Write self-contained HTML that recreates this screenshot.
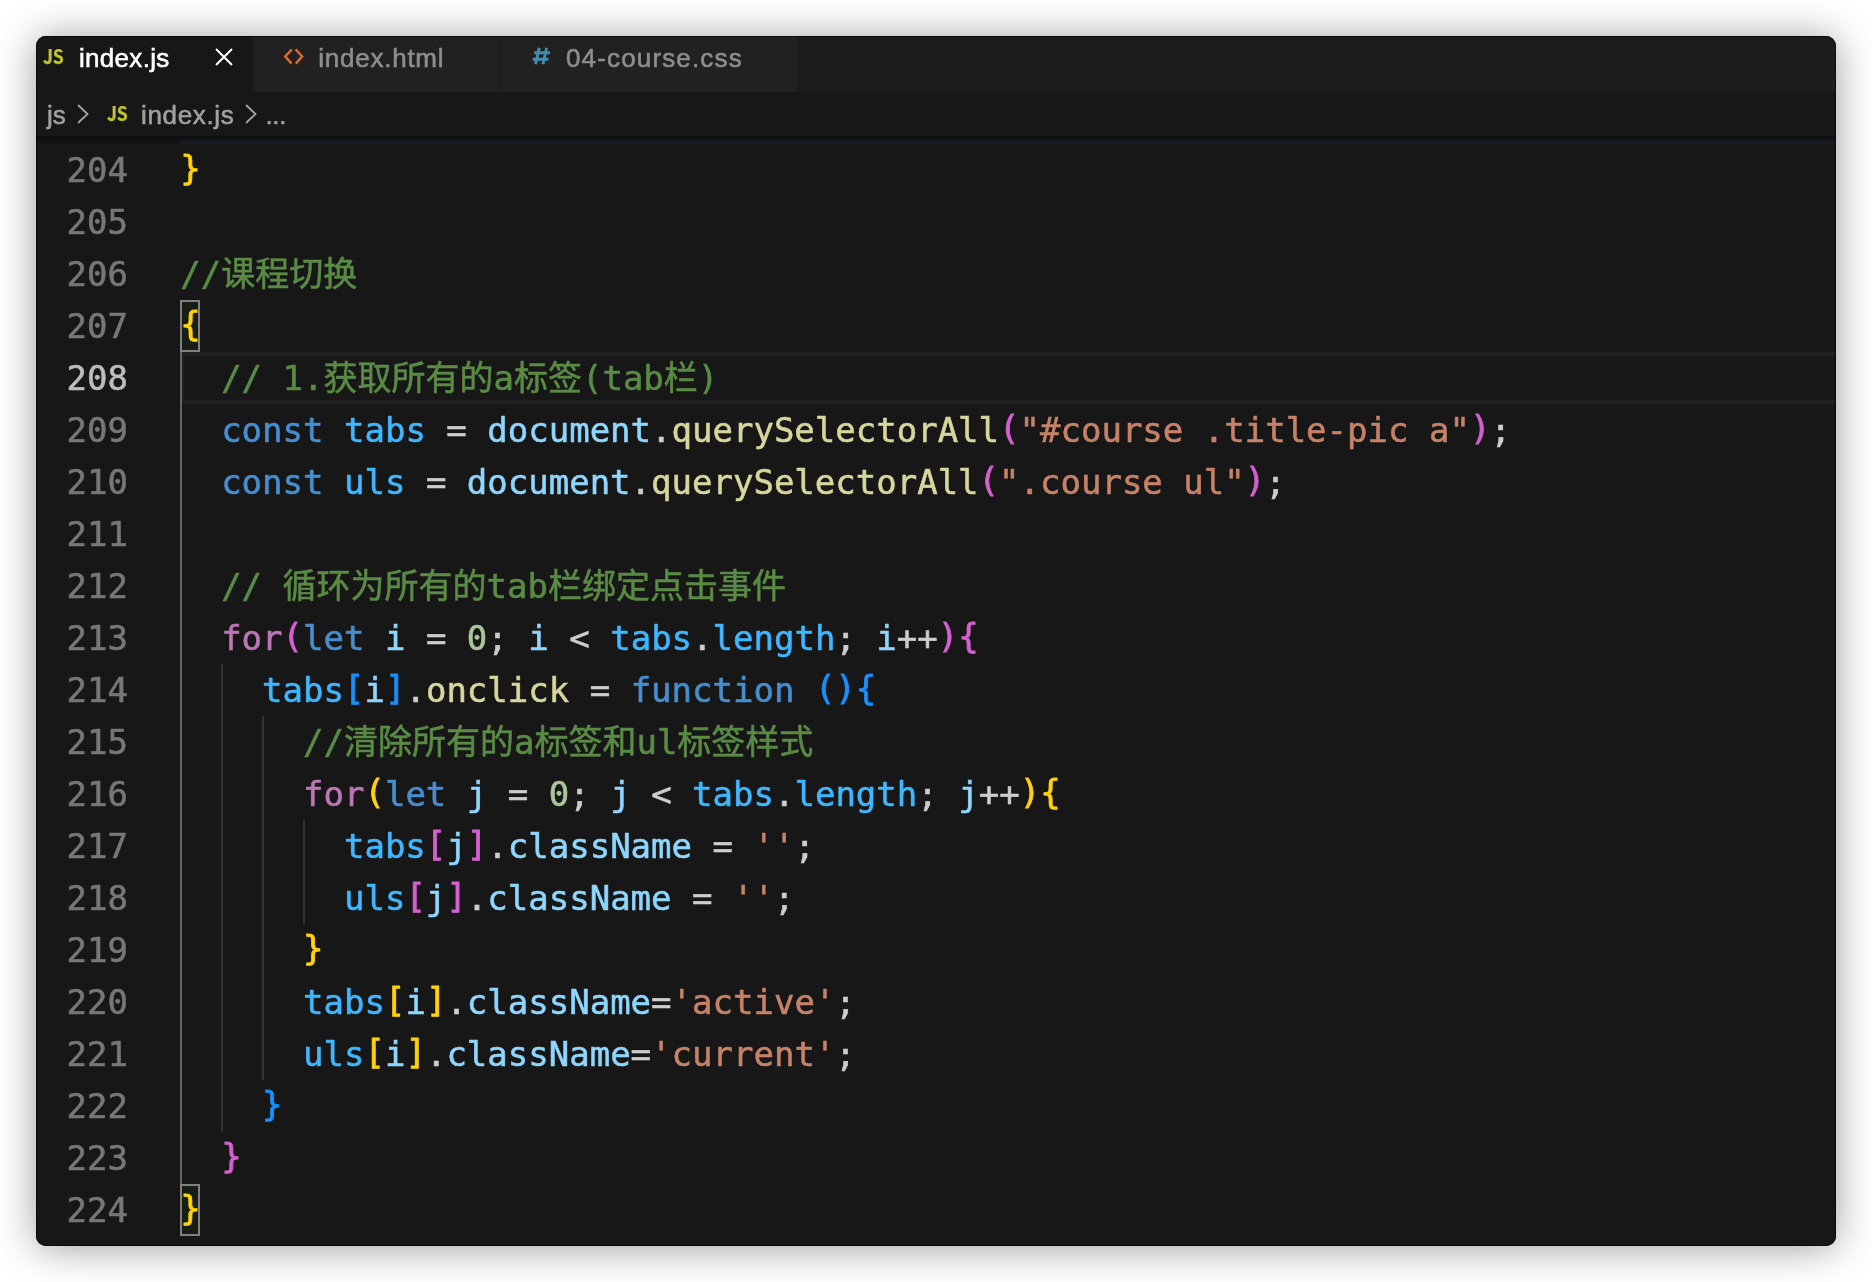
<!DOCTYPE html>
<html lang="zh-CN">
<head>
<meta charset="utf-8">
<title>index.js</title>
<style>
html,body{margin:0;padding:0;}
body{width:1872px;height:1282px;background:#fff;position:relative;overflow:hidden;font-family:"Liberation Sans","Noto Sans CJK SC",sans-serif;}
#win{will-change:transform;position:absolute;left:36px;top:36px;width:1800px;height:1210px;border-radius:10px;background:#171717;box-shadow:0 2px 40px rgba(0,0,0,0.39);overflow:hidden;}
#win::after{content:"";position:absolute;left:0;top:0;right:0;bottom:0;border-radius:10px;box-shadow:inset 0 0 0 1px rgba(0,0,0,0.55);pointer-events:none;}
#tabs{position:absolute;left:0;top:0;width:1800px;height:56px;background:#1c1c1c;}
.tab{position:absolute;top:0;height:56px;background:#212121;color:#8e8e8e;font-size:26px;line-height:56px;white-space:nowrap;}
.tab.active{background:#171717;color:#fff;}
.tab .lbl{position:absolute;top:-6px;line-height:56px;-webkit-text-stroke:0.55px;}
#crumbs{position:absolute;left:0;top:56px;width:1800px;height:44px;background:#171717;color:#a0a0a0;font-size:26px;-webkit-text-stroke:0.55px;}
#crumbs span.t{position:absolute;top:1px;line-height:44px;white-space:nowrap;}
.jsicon{position:absolute;font-family:"Noto Sans CJK SC","Liberation Sans",sans-serif;font-weight:bold;color:#c2c232;font-size:20.5px;line-height:20px;transform-origin:0 0;transform:scaleX(0.86);letter-spacing:-0.3px;-webkit-text-stroke:0.25px;}
svg{position:absolute;overflow:visible;}
#editor{position:absolute;left:0;top:100px;width:1800px;height:1110px;background:#171717;overflow:hidden;}
.row{position:absolute;left:0;width:1800px;height:52px;line-height:52px;font-family:"DejaVu Sans Mono","Noto Sans CJK SC",monospace;font-size:34px;white-space:pre;color:#cdcdcd;-webkit-text-stroke:0.55px;}
.ln{position:absolute;left:0;width:92px;text-align:right;color:#777777;}
.ln.cur{color:#bdbdbd;}
.code{position:absolute;left:144.2px;top:0;}
.c{color:#5a8b45}.k{color:#468ecf}.v{color:#3fb7ff}.n{color:#8ed6fe}.f{color:#d6d69d}.s{color:#c68268}.d{color:#aac69b}.p{color:#bc77b6}
.b1,.b2,.b3{position:relative;top:-2px;-webkit-text-stroke:0.8px}
.b1{color:#ffd20a}.b2{color:#d460cf}.b3{color:#1590ff}
.guide{position:absolute;width:2px;background:#333333;}
.guide.act{background:#646464;}
.bm{position:absolute;width:16px;height:48px;border:2px solid #808080;background:#161e16;}
#curline{position:absolute;left:144px;top:216px;width:1652px;height:44px;border:4px solid #202020;border-right:0;}
#topshadow{position:absolute;left:0;top:0;width:1800px;height:9px;background:linear-gradient(#0d0d0d,rgba(23,23,23,0));}
#bluebar{position:absolute;left:144px;top:0;width:1656px;height:8px;background:#17202b;}
</style>
</head>
<body>
<div id="win">
  <div id="tabs">
    <div class="tab active" style="left:0;width:216px;">
      <span class="jsicon" style="left:7px;top:8.8px;">JS</span>
      <span class="lbl" style="left:43px;letter-spacing:0.3px;">index.js</span>
      <svg style="left:179px;top:12px;" width="18" height="18" viewBox="0 0 18 18"><path d="M1 1 L17 17 M17 1 L1 17" stroke="#fff" stroke-width="2" fill="none"/></svg>
    </div>
    <div class="tab" style="left:218px;width:246px;">
      <svg style="left:29px;top:12px;" width="22" height="18" viewBox="0 0 22 18"><path d="M8.8 1.4 L2.2 8.4 L8.6 15.6 M12.6 1.4 L19.2 8.4 L12.8 15.6" stroke="#de6926" stroke-width="2.4" fill="none"/></svg>
      <span class="lbl" style="left:64.3px;letter-spacing:0.75px;">index.html</span>
    </div>
    <div class="tab" style="left:466px;width:295px;">
      <svg style="left:30px;top:11px;" width="19" height="18" viewBox="0 0 19 18"><path d="M7.2 0.8 L3.6 17.2 M14.6 0.8 L11 17.2 M2.2 5.8 H18 M0.6 12.2 H16.4" stroke="#418caf" stroke-width="2.9" fill="none"/></svg>
      <span class="lbl" style="left:64px;letter-spacing:1.15px;">04-course.css</span>
    </div>
  </div>
  <div id="crumbs">
    <span class="t" style="left:11px;">js</span>
    <svg style="left:41px;top:12px;" width="12" height="20" viewBox="0 0 12 20"><path d="M1 1 L10.5 10 L1 19" stroke="#a3a3a3" stroke-width="1.8" fill="none"/></svg>
    <span class="jsicon" style="left:71px;top:10px;">JS</span>
    <span class="t" style="left:105px;letter-spacing:0.65px;">index.js</span>
    <svg style="left:209px;top:12px;" width="12" height="20" viewBox="0 0 12 20"><path d="M1 1 L10.5 10 L1 19" stroke="#a3a3a3" stroke-width="1.8" fill="none"/></svg>
    <span class="t" style="left:229.5px;letter-spacing:-0.4px;">...</span>
  </div>
  <div id="editor">
    <div id="bluebar"></div>
    <div id="topshadow"></div>
    <div id="curline"></div>
    <div class="guide act" style="left:144px;top:216px;height:832px;"></div>
    <div class="guide" style="left:185px;top:528px;height:468px;"></div>
    <div class="guide" style="left:226px;top:580px;height:364px;"></div>
    <div class="guide" style="left:267px;top:684px;height:104px;"></div>
    <div class="bm" style="left:144px;top:164px;"></div>
    <div class="bm" style="left:144px;top:1048px;"></div>
<div class="row" style="top:8px"><span class="ln">204</span><span class="code"><span class="b1">}</span></span></div>
<div class="row" style="top:60px"><span class="ln">205</span><span class="code"></span></div>
<div class="row" style="top:112px"><span class="ln">206</span><span class="code"><span class="c">//课程切换</span></span></div>
<div class="row" style="top:164px"><span class="ln">207</span><span class="code"><span class="b1">{</span></span></div>
<div class="row" style="top:216px"><span class="ln cur">208</span><span class="code">  <span class="c">// 1.获取所有的a标签(tab栏)</span></span></div>
<div class="row" style="top:268px"><span class="ln">209</span><span class="code">  <span class="k">const</span> <span class="v">tabs</span> = <span class="n">document</span>.<span class="f">querySelectorAll</span><span class="b2">(</span><span class="s">"#course .title-pic a"</span><span class="b2">)</span>;</span></div>
<div class="row" style="top:320px"><span class="ln">210</span><span class="code">  <span class="k">const</span> <span class="v">uls</span> = <span class="n">document</span>.<span class="f">querySelectorAll</span><span class="b2">(</span><span class="s">".course ul"</span><span class="b2">)</span>;</span></div>
<div class="row" style="top:372px"><span class="ln">211</span><span class="code"></span></div>
<div class="row" style="top:424px"><span class="ln">212</span><span class="code">  <span class="c">// 循环为所有的tab栏绑定点击事件</span></span></div>
<div class="row" style="top:476px"><span class="ln">213</span><span class="code">  <span class="p">for</span><span class="b2">(</span><span class="k">let</span> <span class="n">i</span> = <span class="d">0</span>; <span class="n">i</span> &lt; <span class="v">tabs</span>.<span class="v">length</span>; <span class="n">i</span>++<span class="b2">)</span><span class="b2">{</span></span></div>
<div class="row" style="top:528px"><span class="ln">214</span><span class="code">    <span class="v">tabs</span><span class="b3">[</span><span class="n">i</span><span class="b3">]</span>.<span class="f">onclick</span> = <span class="k">function</span> <span class="b3">()</span><span class="b3">{</span></span></div>
<div class="row" style="top:580px"><span class="ln">215</span><span class="code">      <span class="c">//清除所有的a标签和ul标签样式</span></span></div>
<div class="row" style="top:632px"><span class="ln">216</span><span class="code">      <span class="p">for</span><span class="b1">(</span><span class="k">let</span> <span class="n">j</span> = <span class="d">0</span>; <span class="n">j</span> &lt; <span class="v">tabs</span>.<span class="v">length</span>; <span class="n">j</span>++<span class="b1">)</span><span class="b1">{</span></span></div>
<div class="row" style="top:684px"><span class="ln">217</span><span class="code">        <span class="v">tabs</span><span class="b2">[</span><span class="n">j</span><span class="b2">]</span>.<span class="n">className</span> = <span class="s">''</span>;</span></div>
<div class="row" style="top:736px"><span class="ln">218</span><span class="code">        <span class="v">uls</span><span class="b2">[</span><span class="n">j</span><span class="b2">]</span>.<span class="n">className</span> = <span class="s">''</span>;</span></div>
<div class="row" style="top:788px"><span class="ln">219</span><span class="code">      <span class="b1">}</span></span></div>
<div class="row" style="top:840px"><span class="ln">220</span><span class="code">      <span class="v">tabs</span><span class="b1">[</span><span class="n">i</span><span class="b1">]</span>.<span class="n">className</span>=<span class="s">'active'</span>;</span></div>
<div class="row" style="top:892px"><span class="ln">221</span><span class="code">      <span class="v">uls</span><span class="b1">[</span><span class="n">i</span><span class="b1">]</span>.<span class="n">className</span>=<span class="s">'current'</span>;</span></div>
<div class="row" style="top:944px"><span class="ln">222</span><span class="code">    <span class="b3">}</span></span></div>
<div class="row" style="top:996px"><span class="ln">223</span><span class="code">  <span class="b2">}</span></span></div>
<div class="row" style="top:1048px"><span class="ln">224</span><span class="code"><span class="b1">}</span></span></div>
  </div>
</div>
</body>
</html>
